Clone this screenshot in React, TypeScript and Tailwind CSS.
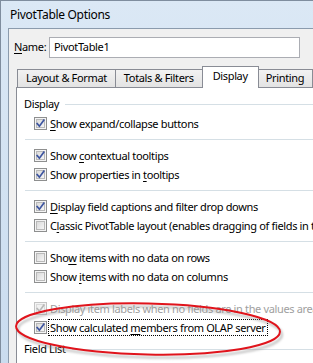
import React from "react";

const font = { fontFamily: '"Noto Sans", "Open Sans", sans-serif' };

function Box({ checked, disabled }: { checked?: boolean; disabled?: boolean }) {
  return (
    <svg width="13" height="13" viewBox="0 0 13 13" className="shrink-0">
      <defs>
        <linearGradient id="cbg" x1="0" y1="0" x2="1" y2="1">
          <stop offset="0" stopColor="#d9d9d9" />
          <stop offset="1" stopColor="#f7f7f7" />
        </linearGradient>
      </defs>
      <rect x="0.5" y="0.5" width="12" height="12" fill="#f4f4f4" stroke={disabled ? "#c4c4c4" : "#8e8f8f"} />
      <rect x="2.5" y="2.5" width="8" height="8" fill={disabled ? "#f2f2f2" : "url(#cbg)"} stroke={disabled ? "#dadada" : "#b9b9b9"} />
      {checked && (
        <path
          d="M3.2 6.6 L5.4 9.2 L9.8 3.2"
          fill="none"
          stroke={disabled ? "#b8b8b8" : "#3d55a0"}
          strokeWidth="1.7"
          strokeLinecap="square"
        />
      )}
    </svg>
  );
}

function U({ children }: { children: React.ReactNode }) {
  return <span className="underline underline-offset-[2px] decoration-1">{children}</span>;
}

function Row({
  checked,
  disabled,
  focus,
  children,
}: {
  checked?: boolean;
  disabled?: boolean;
  focus?: boolean;
  children: React.ReactNode;
}) {
  return (
    <div className="flex h-[19px] items-center pl-[17px] whitespace-nowrap">
      <Box checked={checked} disabled={disabled} />
      <span
        className={
          "ml-[1px] px-[1px] leading-[15px] " +
          (disabled ? "text-[#a0a0a0] " : "text-black ") +
          (focus ? "border border-dotted border-black" : "border border-transparent")
        }
      >
        {children}
      </span>
    </div>
  );
}

function Sep() {
  return <div className="my-[6px] ml-[8px] h-px bg-[#d5dfe5]" />;
}

function Header({ children }: { children: React.ReactNode }) {
  return (
    <div className="flex h-[19px] items-center pl-[7px] whitespace-nowrap">
      <span className="text-black">{children}</span>
      <div className="ml-[6px] h-px flex-1 bg-[#d5dfe5]" />
    </div>
  );
}

function Tab({ children, sel }: { children: React.ReactNode; sel?: boolean }) {
  if (sel)
    return (
      <div className="relative z-10 -mx-[1px] -mb-px flex h-[22px] items-center border border-b-0 border-[#898c95] bg-white px-[10px] pb-[3px]">
        {children}
      </div>
    );
  return (
    <div className="flex h-[18px] items-center border border-b-0 border-l-0 border-[#898c95] bg-gradient-to-b from-[#f2f2f2] to-[#e3e3e3] px-[8px] first:border-l">
      {children}
    </div>
  );
}

export default function App() {
  return (
    <div
      className="relative h-[363px] w-[313px] overflow-hidden border-l border-t border-[#7f8d9e] bg-gradient-to-b from-[#dbe8f5] via-[#d2e2f2] to-[#cadcef] text-[11px] tracking-[-0.35px] text-black"
      style={font}
    >
      <div className="flex h-[27px] items-center pl-[9px] text-[12px] tracking-[-0.3px] text-black">PivotTable Options</div>
      <div className="ml-[7px] flex h-[400px] flex-col border-l border-t border-[#8b9bad] bg-[#f0f0f0]">
        <div className="mt-[8px] flex items-center pl-[5px]">
          <span className="w-[35px]">
            <U>N</U>ame:
          </span>
          <div className="flex h-[21px] w-[251px] items-center border border-[#abadb3] bg-white pl-[4px]">PivotTable1</div>
        </div>
        <div className="mt-[7px] flex h-[22px] items-end pl-[8px] whitespace-nowrap">
          <Tab>Layout &amp; Format</Tab>
          <Tab>Totals &amp; Filters</Tab>
          <Tab sel>Display</Tab>
          <Tab>Printing</Tab>
          <Tab>Data</Tab>
        </div>
        <div className="ml-[7px] flex-1 border-l border-t border-[#898c95] bg-white pt-[7px]">
          <Header>Display</Header>
          <Row checked>
            <U>S</U>how expand/collapse buttons
          </Row>
          <Sep />
          <Row checked>
            Show <U>c</U>ontextual tooltips
          </Row>
          <Row checked>
            Show properties in <U>t</U>ooltips
          </Row>
          <Sep />
          <Row checked>
            <U>D</U>isplay field captions and filter drop downs
          </Row>
          <Row>
            C<U>l</U>assic PivotTable layout (enables dragging of fields in the grid)
          </Row>
          <Sep />
          <Row>
            Sho<U>w</U> items with no data on rows
          </Row>
          <Row>
            Show <U>i</U>tems with no data on columns
          </Row>
          <Sep />
          <Row checked disabled>
            Display item labels when no fields are in the values area
          </Row>
          <Row checked focus>
            Show calculated <U>m</U>embers from OLAP server
          </Row>
          <div className="mt-[3px]">
            <Header>Field List</Header>
          </div>
        </div>
      </div>
      <svg className="pointer-events-none absolute left-0 top-0" width="313" height="363" viewBox="0 0 313 363">
        <defs>
          <filter id="sh" x="-10%" y="-50%" width="120%" height="200%">
            <feGaussianBlur stdDeviation="1.2" />
          </filter>
        </defs>
        <g transform="rotate(1.2 147 328)">
          <ellipse cx="149" cy="331" rx="132" ry="25.5" fill="none" stroke="#8a8a8a" strokeOpacity="0.55" strokeWidth="2.2" filter="url(#sh)" />
          <ellipse cx="147" cy="328" rx="132" ry="25.5" fill="none" stroke="#e0141c" strokeWidth="2" />
        </g>
      </svg>
    </div>
  );
}
